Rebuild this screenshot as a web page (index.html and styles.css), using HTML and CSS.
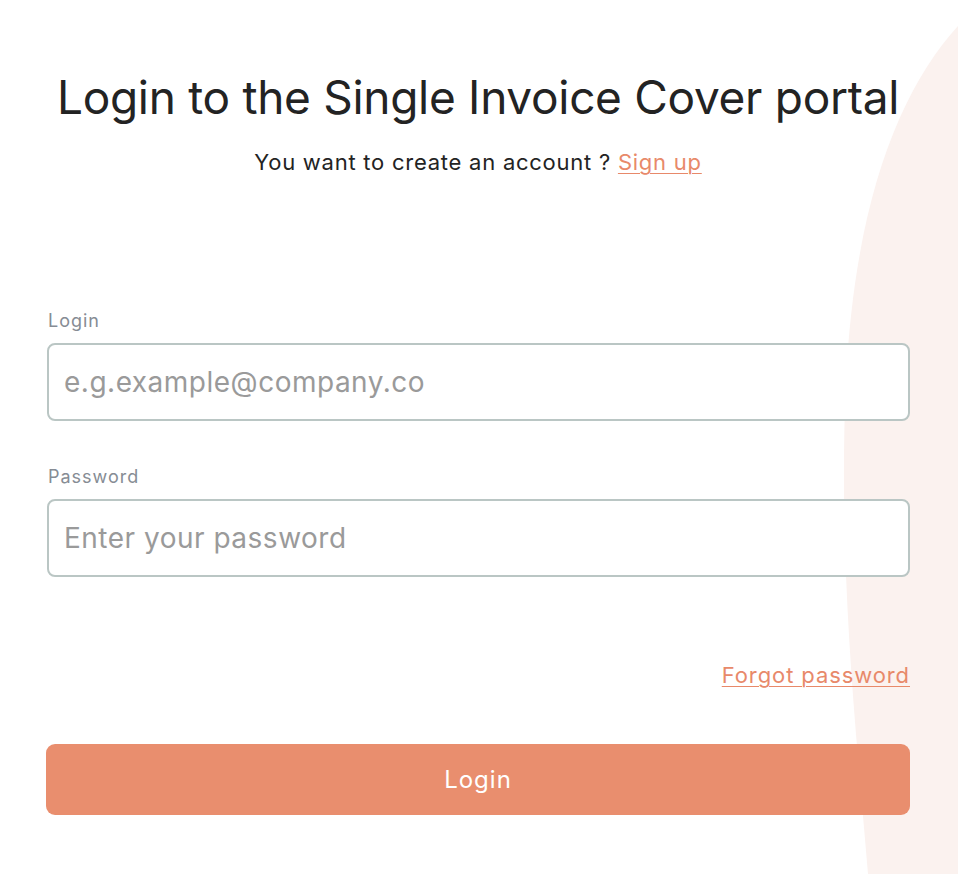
FILE: index.html
```html
<!DOCTYPE html>
<html lang="en">
<head>
<meta charset="utf-8">
<title>Login</title>
<link rel="stylesheet" href="styles.css">
</head>
<body>
<svg class="blob" viewBox="0 0 958 874" preserveAspectRatio="none" aria-hidden="true">
  <path d="M958 26 C 900 90, 855 200, 846 380 C 838 560, 855 720, 868 874 L 958 874 Z" fill="#fbf2ef"/>
</svg>
<main class="page">
  <h1 class="title">Login to the Single Invoice Cover portal</h1>
  <p class="subtitle">You want to create an account ? <a href="#" class="link">Sign up</a></p>
  <form class="form">
    <label class="field">
      <span class="label">Login</span>
      <input class="input" type="text" placeholder="e.g.example@company.co">
    </label>
    <label class="field">
      <span class="label">Password</span>
      <input class="input" type="password" placeholder="Enter your password">
    </label>
    <div class="forgot-row"><a href="#" class="link forgot">Forgot password</a></div>
    <button type="button" class="btn">Login</button>
  </form>
</main>
</body>
</html>
```
FILE: styles.css
```css
html, body {
  margin: 0;
  padding: 0;
  background: #ffffff;
}
body {
  font-family: Inter, "Liberation Sans", sans-serif;
  color: #232323;
  position: relative;
  min-height: 874px;
  overflow: hidden;
}
.blob {
  position: absolute;
  left: 0;
  top: 0;
  width: 958px;
  height: 874px;
  z-index: 0;
}
.page {
  position: relative;
  z-index: 1;
  padding: 70px 48px 0 46px;
  display: flex;
  flex-direction: column;
}
.title {
  margin: 0;
  text-align: center;
  font-weight: 400;
  font-size: 46px;
  line-height: 54px;
  letter-spacing: -0.3px;
  color: #232323;
}
.subtitle {
  margin: 23px 0 0;
  text-align: center;
  font-size: 22px;
  line-height: 30px;
  letter-spacing: 0.75px;
}
.link {
  color: #e8896a;
  text-decoration: underline;
  text-underline-offset: 3px;
  text-decoration-thickness: 1px;
}
.form {
  margin-top: 133px;
  display: flex;
  flex-direction: column;
}
.field {
  display: flex;
  flex-direction: column;
  margin-bottom: 45px;
}
.label {
  font-size: 18px;
  line-height: 22px;
  letter-spacing: 1px;
  color: #868c94;
  padding-left: 2px;
  margin-bottom: 11px;
}
.input {
  box-sizing: border-box;
  height: 78px;
  width: 863px;
  margin-left: 1px;
  border: 2px solid #bac6c4;
  border-radius: 8px;
  padding: 0 15px;
  font-family: inherit;
  font-size: 28px;
  letter-spacing: 0.5px;
  color: #232323;
  background: #fff;
  outline: none;
}
.input::placeholder {
  color: #9a9a9a;
}
.forgot-row {
  display: flex;
  justify-content: flex-end;
  margin-top: 39px;
  width: 864px;
}
.forgot {
  font-size: 22px;
  line-height: 28px;
  letter-spacing: 0.9px;
}
.btn {
  margin-top: 55px;
  width: 864px;
  height: 71px;
  border: none;
  border-radius: 9px;
  background: #e98e6e;
  color: #fff;
  font-family: inherit;
  font-size: 24px;
  letter-spacing: 1px;
}
```
